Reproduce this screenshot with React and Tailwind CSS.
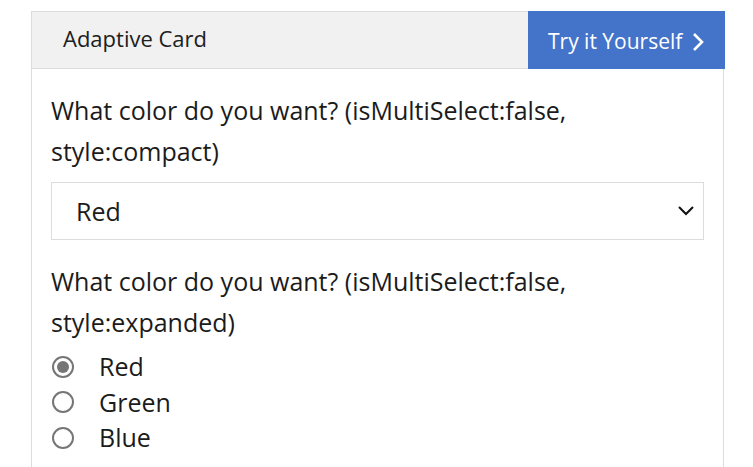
import React from "react";

function Radio({ checked, label }) {
  return (
    <div className="flex h-[35.5px] items-center">
      <div className="ml-[1px] flex h-[22px] w-[22px] items-center justify-center rounded-full border-2 border-[#767676]">
        {checked && <div className="h-[12px] w-[12px] rounded-full bg-[#767676]" />}
      </div>
      <span className="ml-[25px]">{label}</span>
    </div>
  );
}

export default function App() {
  return (
    <div
      className="min-h-[467px] bg-white pl-[31px] pt-[11px] text-[#1b1b1b]"
      style={{ fontFamily: '"Open Sans", "Noto Sans", sans-serif' }}
    >
      <div className="w-[694px]">
        <div className="flex h-[58px] border border-[#dcdcdc] bg-[#f1f1f1]">
          <div className="flex items-center pb-[3px] pl-[31px] text-[22px] text-[#202020]">Adaptive Card</div>
          <div className="-my-px -mr-px ml-auto flex w-[197px] items-center gap-[10px] bg-[#4473ca] pl-[20px] pt-[3px] text-[21px] text-white">
            <span>Try it Yourself</span>
            <svg width="12" height="20" viewBox="0 0 12 20" fill="none">
              <path d="M2 2l8 8-8 8" stroke="white" strokeWidth="2.6" />
            </svg>
          </div>
        </div>
        <div className="h-[398px] w-[693px] border-x border-[#dcdcdc] px-[19px] pt-[21px] text-[25px] leading-[41px]">
          <div>What color do you want? (isMultiSelect:false,<br />style:compact)</div>
          <div className="mt-[10px] flex h-[58px] items-center justify-between border border-[#dcdcdc] pl-[24px] pr-[9px]">
            <span>Red</span>
            <svg width="16" height="10" viewBox="0 0 16 10" fill="none">
              <path d="M1 1l7 7 7-7" stroke="#111" strokeWidth="2" />
            </svg>
          </div>
          <div className="mt-[21px]">What color do you want? (isMultiSelect:false,<br />style:expanded)</div>
          <div className="mt-[6px]">
            <Radio checked label="Red" />
            <Radio label="Green" />
            <Radio label="Blue" />
          </div>
        </div>
      </div>
    </div>
  );
}
